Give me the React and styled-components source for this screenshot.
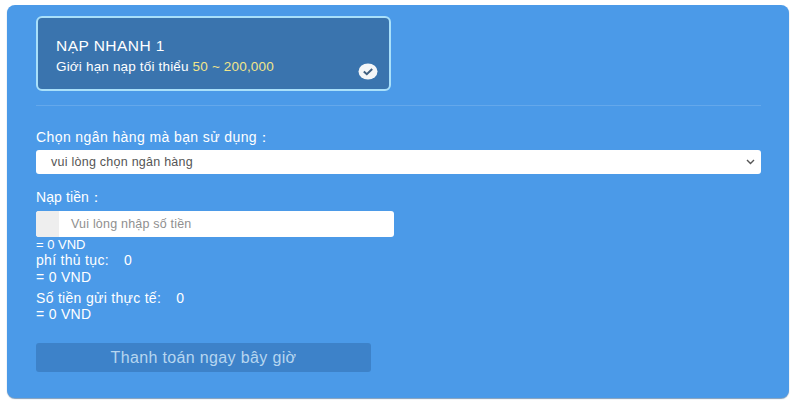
import React from 'react';
import styled, { createGlobalStyle } from 'styled-components';

const GlobalStyle = createGlobalStyle`
  html, body {
    margin: 0;
    padding: 0;
    background: #fff;
    font-family: "Liberation Sans", Arial, sans-serif;
  }
  * { box-sizing: border-box; }
`;

const Page = styled.div`
  width: 800px;
  height: 400px;
  padding: 5px 11px 2px 7px;
  overflow: hidden;
`;

const Panel = styled.div`
  height: 393px;
  background: #4b9ae8;
  border-radius: 8px;
  box-shadow: 0 1px 1px rgba(40, 90, 140, 0.6);
  padding: 11px 29px 0;
  color: #fff;
  display: flex;
  flex-direction: column;
`;

const Card = styled.div`
  position: relative;
  width: 355px;
  height: 75px;
  background: #3a74ae;
  border: 2px solid #a9e0fa;
  border-radius: 6px;
  padding: 19px 18px 0;
`;

const CardTitle = styled.div`
  font-size: 15.5px;
  line-height: 17px;
  letter-spacing: 0.45px;
`;

const CardText = styled.div`
  font-size: 13.5px;
  line-height: 16px;
  margin-top: 5px;
  letter-spacing: 0.17px;
`;

const Amount = styled.span`
  color: #f1e58a;
`;

const CheckBadge = styled.svg`
  position: absolute;
  right: 11px;
  bottom: 9px;
  width: 20px;
  height: 17px;
`;

const Divider = styled.div`
  height: 1px;
  background: rgba(255, 255, 255, 0.14);
  margin-top: 14px;
  width: 725px;
`;

const Label = styled.div`
  font-size: 14px;
  line-height: 16px;
  letter-spacing: ${(p) => p.$spacing || '0.4px'};
  margin-top: ${(p) => p.$top || 0}px;
`;

const SelectBox = styled.div`
  width: 725px;
  height: 24px;
  margin-top: 5px;
  background: #fff;
  border-radius: 3px;
  padding: 0 6px 0 15px;
  display: flex;
  align-items: center;
  justify-content: space-between;
  color: #555;
  font-size: 12.5px;
  letter-spacing: 0.25px;
`;

const AmountInput = styled.div`
  width: 358px;
  height: 26px;
  margin-top: 6px;
  background: #fff;
  border-radius: 3px;
  overflow: hidden;
  display: flex;
  align-items: center;
`;

const Addon = styled.div`
  width: 23px;
  height: 100%;
  background: #eeeeee;
`;

const Placeholder = styled.div`
  margin-left: 12px;
  font-size: 12.5px;
  letter-spacing: 0.2px;
  color: #8f8f8f;
`;

const Line = styled.div`
  font-size: ${(p) => p.$size || 14}px;
  line-height: ${(p) => p.$height || 16}px;
  letter-spacing: ${(p) => p.$spacing || '0.3px'};
  margin-top: ${(p) => p.$top || 0}px;
`;

const Value = styled.span`
  margin-left: 15px;
`;

const PayButton = styled.div`
  width: 335px;
  height: 29px;
  margin-top: 21px;
  background: #3d82c9;
  border-radius: 3px;
  color: #b6d6f0;
  font-size: 16px;
  letter-spacing: 0.35px;
  display: flex;
  align-items: center;
  justify-content: center;
`;

export default function App() {
  return (
    <Page>
      <GlobalStyle />
      <Panel>
        <Card>
          <CardTitle>NẠP NHANH 1</CardTitle>
          <CardText>
            Giới hạn nạp tối thiểu <Amount>50 ~ 200,000</Amount>
          </CardText>
          <CheckBadge viewBox="0 0 20 17">
            <ellipse cx="10" cy="8.5" rx="9.5" ry="8" fill="#f4f6f8" />
            <path d="M5.8 8.6 L8.8 11.2 L14.2 6" fill="none" stroke="#3f5f80" strokeWidth="2" />
          </CheckBadge>
        </Card>
        <Divider />
        <Label $top={23}>Chọn ngân hàng mà bạn sử dụng：</Label>
        <SelectBox>
          vui lòng chọn ngân hàng
          <svg width="9" height="6" viewBox="0 0 9 6">
            <path d="M1 1 L4.5 4.5 L8 1" fill="none" stroke="#555" strokeWidth="1.4" />
          </svg>
        </SelectBox>
        <Label $top={15} $spacing="0.1px">Nạp tiền：</Label>
        <AmountInput>
          <Addon />
          <Placeholder>Vui lòng nhập số tiền</Placeholder>
        </AmountInput>
        <Line $size={13} $spacing="0" $height={15}>= 0 VND</Line>
        <Line>phí thủ tục:<Value>0</Value></Line>
        <Line $top={1}>= 0 VND</Line>
        <Line $top={5}>Số tiền gửi thực tế:<Value>0</Value></Line>
        <Line>= 0 VND</Line>
        <PayButton>Thanh toán ngay bây giờ</PayButton>
      </Panel>
    </Page>
  );
}
